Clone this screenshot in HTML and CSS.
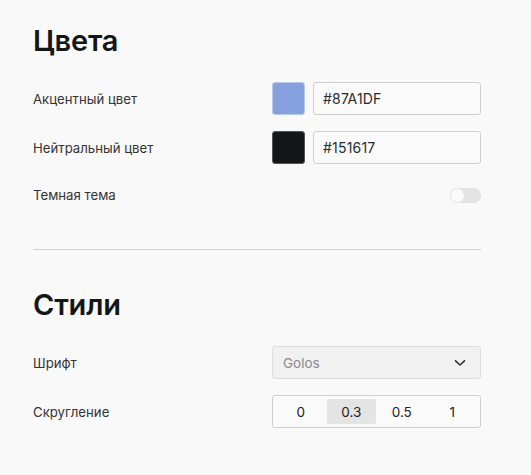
FILE: index.html
```html
<!DOCTYPE html>
<html lang="ru">
<head>
<meta charset="utf-8">
<link rel="stylesheet" href="styles.css">
</head>
<body>
<main class="page">
  <section class="section">
    <h2 class="title">Цвета</h2>
    <div class="rows">
      <div class="row">
        <span class="label">Акцентный цвет</span>
        <div class="control color-control">
          <span class="swatch swatch-accent"></span>
          <div class="text-input">#87A1DF</div>
        </div>
      </div>
      <div class="row">
        <span class="label">Нейтральный цвет</span>
        <div class="control color-control">
          <span class="swatch swatch-neutral"></span>
          <div class="text-input">#151617</div>
        </div>
      </div>
      <div class="row row-toggle">
        <span class="label">Темная тема</span>
        <div class="control toggle-control">
          <span class="toggle"><span class="knob"></span></span>
        </div>
      </div>
    </div>
  </section>
  <hr class="divider">
  <section class="section">
    <h2 class="title">Стили</h2>
    <div class="rows">
      <div class="row">
        <span class="label">Шрифт</span>
        <div class="control">
          <div class="select">
            <span class="select-value">Golos</span>
            <svg class="chevron" width="12" height="8" viewBox="0 0 12 8"><path d="M1.5 1.8 L6 6 L10.5 1.8" fill="none" stroke="#333" stroke-width="1.6" stroke-linecap="round" stroke-linejoin="round"/></svg>
          </div>
        </div>
      </div>
      <div class="row">
        <span class="label">Скругление</span>
        <div class="control">
          <div class="segmented">
            <span class="seg">0</span>
            <span class="seg seg-active">0.3</span>
            <span class="seg">0.5</span>
            <span class="seg">1</span>
          </div>
        </div>
      </div>
    </div>
  </section>
</main>
</body>
</html>
```

FILE: styles.css
```css
* { box-sizing: border-box; }
html, body { margin: 0; padding: 0; background: #f9f9f9; }
body {
  font-family: Inter, "Noto Sans", "Liberation Sans", sans-serif;
  color: #2b2b2b;
}
.page {
  width: 448px;
  margin-left: 33px;
  padding-top: 22px;
}
.title {
  margin: 0;
  font-size: 29px;
  font-weight: 600;
  line-height: 38px;
  color: #151617;
  letter-spacing: -0.2px;
}
.rows {
  display: flex;
  flex-direction: column;
  gap: 16px;
  margin-top: 22px;
}
.row {
  display: flex;
  align-items: center;
  height: 33px;
}
.row-toggle { height: 30px; }
.label {
  width: 239px;
  font-size: 13.2px;
  color: #333;
}
.control {
  flex: 1;
  display: flex;
  align-items: center;
}
.color-control { gap: 8px; }
.swatch {
  width: 33px;
  height: 33px;
  border-radius: 3px;
  border: 1px solid #dcdcdc;
  flex: none;
}
.swatch-accent { background: #87a1df; border-color: #b9c7ea; }
.swatch-neutral { background: #151617; border-color: #555; }
.text-input {
  flex: 1;
  height: 33px;
  border: 1px solid #cfcfcf;
  border-radius: 3px;
  background: #fafafa;
  padding-left: 9px;
  display: flex;
  align-items: center;
  font-size: 14px;
  color: #2b2b2b;
  letter-spacing: 0.2px;
}
.toggle-control { justify-content: flex-end; }
.toggle {
  width: 31px;
  height: 15px;
  border-radius: 8px;
  background: #e3e3e3;
  display: flex;
  align-items: center;
}
.knob {
  width: 15px;
  height: 15px;
  border-radius: 50%;
  background: #fbfbfb;
  border: 1px solid #e6e6e6;
}
.divider {
  margin: 39px 0 36px;
  border: none;
  border-top: 1px solid #d2d2d2;
  height: 0;
}
.select {
  flex: 1;
  height: 33px;
  border: 1px solid #dedede;
  border-radius: 3px;
  background: #f1f1f1;
  display: flex;
  align-items: center;
  justify-content: space-between;
  padding: 0 14px 0 10px;
}
.select-value { font-size: 13.5px; color: #8a8a8a; }
.chevron { display: block; }
.segmented {
  flex: 1;
  height: 33px;
  border: 1px solid #cfcfcf;
  border-radius: 3px;
  background: #fafafa;
  display: grid;
  grid-template-columns: repeat(4, 1fr);
  gap: 1px;
  padding: 3px;
}
.seg {
  display: flex;
  align-items: center;
  justify-content: center;
  font-size: 13.5px;
  color: #222;
  border-radius: 2px;
}
.seg-active { background: #e4e4e4; }
```
